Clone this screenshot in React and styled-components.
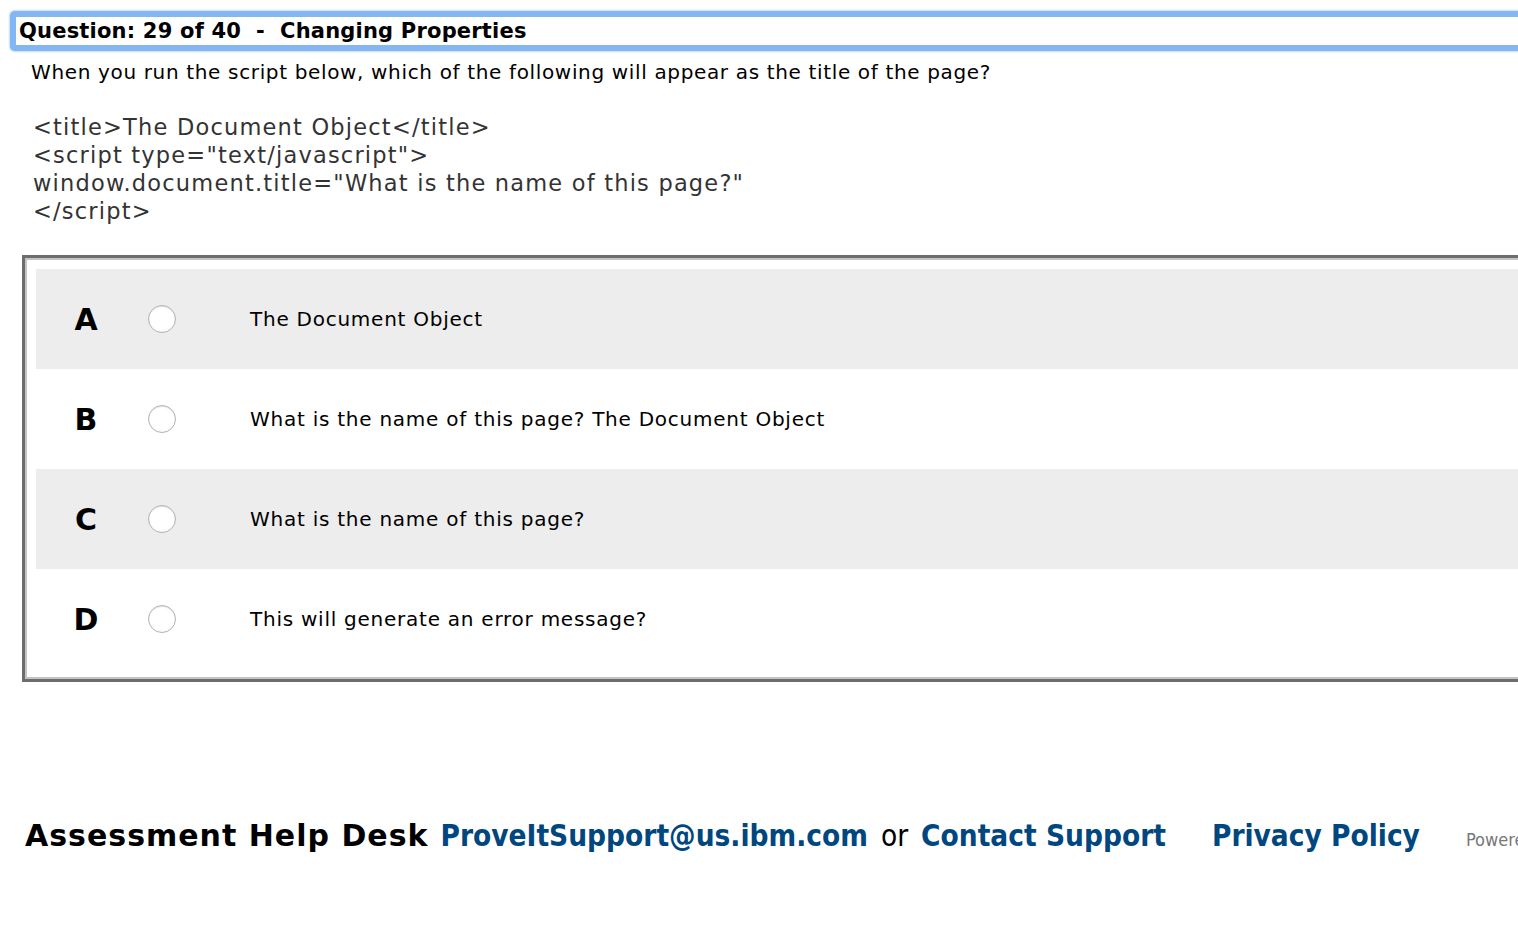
import styled, { createGlobalStyle } from "styled-components";

const GlobalStyle = createGlobalStyle`
  html, body {
    margin: 0;
    padding: 0;
    background: #fff;
    overflow: hidden;
  }
  body {
    font-family: "DejaVu Sans", Verdana, sans-serif;
    color: #000;
  }
`

const Page = styled.div`
  width: 1600px;
  padding: 11px 0 0 10px;
`

const TitleBar = styled.div`
  border: 6px solid #84b6f4;
  border-right: none;
  border-radius: 5px 0 0 5px;
  box-shadow: 0 0 2px 1px #c4dcfb;
  height: 28px;
  padding-left: 3px;
  display: flex;
  align-items: center;
  font-weight: bold;
  font-size: 21px;
  letter-spacing: 0.2px;
  white-space: pre;
`

const Prompt = styled.div`
  margin: 9px 0 0 21px;
  font-size: 20px;
  letter-spacing: 0.65px;
  line-height: 24px;
`

const Code = styled.pre`
  margin: 29px 0 0 23px;
  font-family: "DejaVu Sans", Tahoma, sans-serif;
  font-size: 22.5px;
  letter-spacing: 1.2px;
  line-height: 28px;
  color: #333;
`

const Choices = styled.div`
  margin: 30px 0 0 12px;
  border-top: 3px solid #6d6d6d;
  border-left: 3px solid #6d6d6d;
  border-bottom: 3px solid #6d6d6d;
  box-shadow: inset 2px 2px 0 #c4c4c4, inset 0 -2px 0 #c4c4c4;
  padding: 11px 0 10px 11px;
  box-sizing: border-box;
`

const Row = styled.label`
  display: grid;
  grid-template-columns: 100px 52px 1fr;
  align-items: center;
  height: 100px;
  background: ${p => (p.$shaded ? "#ededed" : "#fff")};
`

const Letter = styled.span`
  text-align: center;
  font-weight: bold;
  font-size: 30px;
`

const Radio = styled.span`
  justify-self: center;
  width: 26px;
  height: 26px;
  border-radius: 50%;
  border: 1px solid #b4b4b4;
  background: radial-gradient(circle at 50% 40%, #fff 60%, #f2f2f2 100%);
  box-shadow: inset 0 1px 1px rgba(0, 0, 0, 0.12);
`

const Answer = styled.span`
  padding-left: 62px;
  font-size: 20px;
  letter-spacing: 0.75px;
`

const Footer = styled.div`
  margin: 136px 0 0 15px;
  display: flex;
  align-items: baseline;
  white-space: nowrap;
  font-family: "DejaVu Sans Condensed", Tahoma, sans-serif;
  font-size: 29.5px;
`

const Desk = styled.span`
  font-family: "DejaVu Sans", Tahoma, sans-serif;
  font-size: 30px;
  letter-spacing: 1px;
  font-weight: bold;
  margin-right: 12px;
`

const Link = styled.a`
  color: #00467f;
  font-weight: bold;
  text-decoration: none;
  margin-right: ${p => p.$gap || 0}px;
`

const Or = styled.span`
  margin: 0 13px;
`

const Powered = styled.span`
  color: #777;
  font-size: 18px;
`

const options = [
  { key: "A", text: "The Document Object" },
  { key: "B", text: "What is the name of this page? The Document Object" },
  { key: "C", text: "What is the name of this page?" },
  { key: "D", text: "This will generate an error message?" },
]

export default function App() {
  return (
    <>
      <GlobalStyle />
      <Page>
        <TitleBar>Question: 29 of 40  -  Changing Properties</TitleBar>
        <Prompt>When you run the script below, which of the following will appear as the title of the page?</Prompt>
        <Code>{`<title>The Document Object</title>
<script type="text/javascript">
window.document.title="What is the name of this page?"
</script>`}</Code>

        <Choices>
          {options.map((o, i) => (
            <Row key={o.key} $shaded={i % 2 === 0}>
              <Letter>{o.key}</Letter>
              <Radio />
              <Answer>{o.text}</Answer>
            </Row>
          ))}
        </Choices>

        <Footer>
          <Desk>Assessment Help Desk</Desk>
          <Link href="#">ProveItSupport@us.ibm.com</Link>
          <Or>or</Or>
          <Link href="#" $gap={46}>Contact Support</Link>
          <Link href="#" $gap={46}>Privacy Policy</Link>
          <Powered>Powered by</Powered>
        </Footer>
      </Page>
    </>
  )
}
